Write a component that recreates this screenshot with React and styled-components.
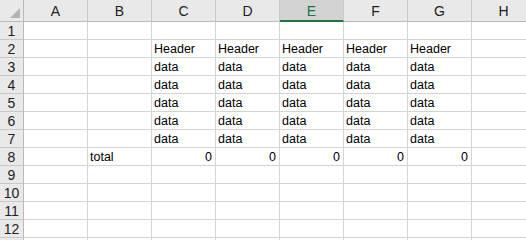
import React from "react";
import styled, { createGlobalStyle } from "styled-components";

const GlobalStyle = createGlobalStyle`
  html, body {
    margin: 0;
    padding: 0;
    background: #ffffff;
    overflow: hidden;
  }
  body {
    font-family: "Liberation Sans", Arial, sans-serif;
  }
`;

const columns = ["A", "B", "C", "D", "E", "F", "G", "H"];
const selectedColumn = "E";

// cell contents by row number -> column letter
const cells = {
  2: { C: "Header", D: "Header", E: "Header", F: "Header", G: "Header" },
  3: { C: "data", D: "data", E: "data", F: "data", G: "data" },
  4: { C: "data", D: "data", E: "data", F: "data", G: "data" },
  5: { C: "data", D: "data", E: "data", F: "data", G: "data" },
  6: { C: "data", D: "data", E: "data", F: "data", G: "data" },
  7: { C: "data", D: "data", E: "data", F: "data", G: "data" },
  8: { B: "total", C: 0, D: 0, E: 0, F: 0, G: 0 },
};

// 12 numbered rows, plus the top sliver of the next one at the window edge
const rows = Array.from({ length: 13 }, (_, i) => i + 1);
const visibleRows = 12;

const Sheet = styled.div`
  display: grid;
  grid-template-columns: 24px repeat(8, 64px);
  grid-template-rows: 22px;
  grid-auto-rows: 18px;
  width: 536px;
`;

const Corner = styled.div`
  position: relative;
  background: #e9e9e9;
  border-right: 1px solid #b9b9b9;
  border-bottom: 1px solid #b9b9b9;
  box-sizing: border-box;

  &::after {
    content: "";
    position: absolute;
    right: 3px;
    bottom: 3px;
    width: 0;
    height: 0;
    border-left: 10px solid transparent;
    border-bottom: 10px solid #b4b4b4;
  }
`;

const ColHeader = styled.div`
  display: flex;
  align-items: center;
  justify-content: center;
  box-sizing: border-box;
  background: ${(p) => (p.$selected ? "#d2d2d2" : "#e9e9e9")};
  border-right: 1px solid #c8c8c8;
  border-bottom: ${(p) => (p.$selected ? "2px solid #217346" : "1px solid #b9b9b9")};
  color: ${(p) => (p.$selected ? "#217346" : "#222222")};
  font-size: 14px;
  padding-top: ${(p) => (p.$selected ? "1px" : "0")};
`;

const RowHeader = styled.div`
  display: flex;
  align-items: center;
  justify-content: center;
  box-sizing: border-box;
  background: #e9e9e9;
  border-right: 1px solid #b9b9b9;
  border-bottom: 1px solid #c8c8c8;
  color: #222222;
  font-size: 14px;
`;

const Cell = styled.div`
  display: flex;
  align-items: flex-end;
  justify-content: ${(p) => (p.$numeric ? "flex-end" : "flex-start")};
  box-sizing: border-box;
  border-right: 1px solid #d4d4d4;
  border-bottom: 1px solid #d4d4d4;
  padding: 0 3px 0 2px;
  font-size: 12.5px;
  line-height: 15px;
  color: #000000;
  white-space: nowrap;
  overflow: hidden;
`;

export default function App() {
  return (
    <>
      <GlobalStyle />
      <Sheet>
        <Corner />
        {columns.map((c) => (
          <ColHeader key={c} $selected={c === selectedColumn}>
            {c}
          </ColHeader>
        ))}
        {rows.map((r) => (
          <React.Fragment key={r}>
            <RowHeader>{r <= visibleRows ? r : ""}</RowHeader>
            {columns.map((c) => {
              const value = cells[r] && cells[r][c];
              return (
                <Cell key={c} $numeric={typeof value === "number"}>
                  {value}
                </Cell>
              );
            })}
          </React.Fragment>
        ))}
      </Sheet>
    </>
  );
}
